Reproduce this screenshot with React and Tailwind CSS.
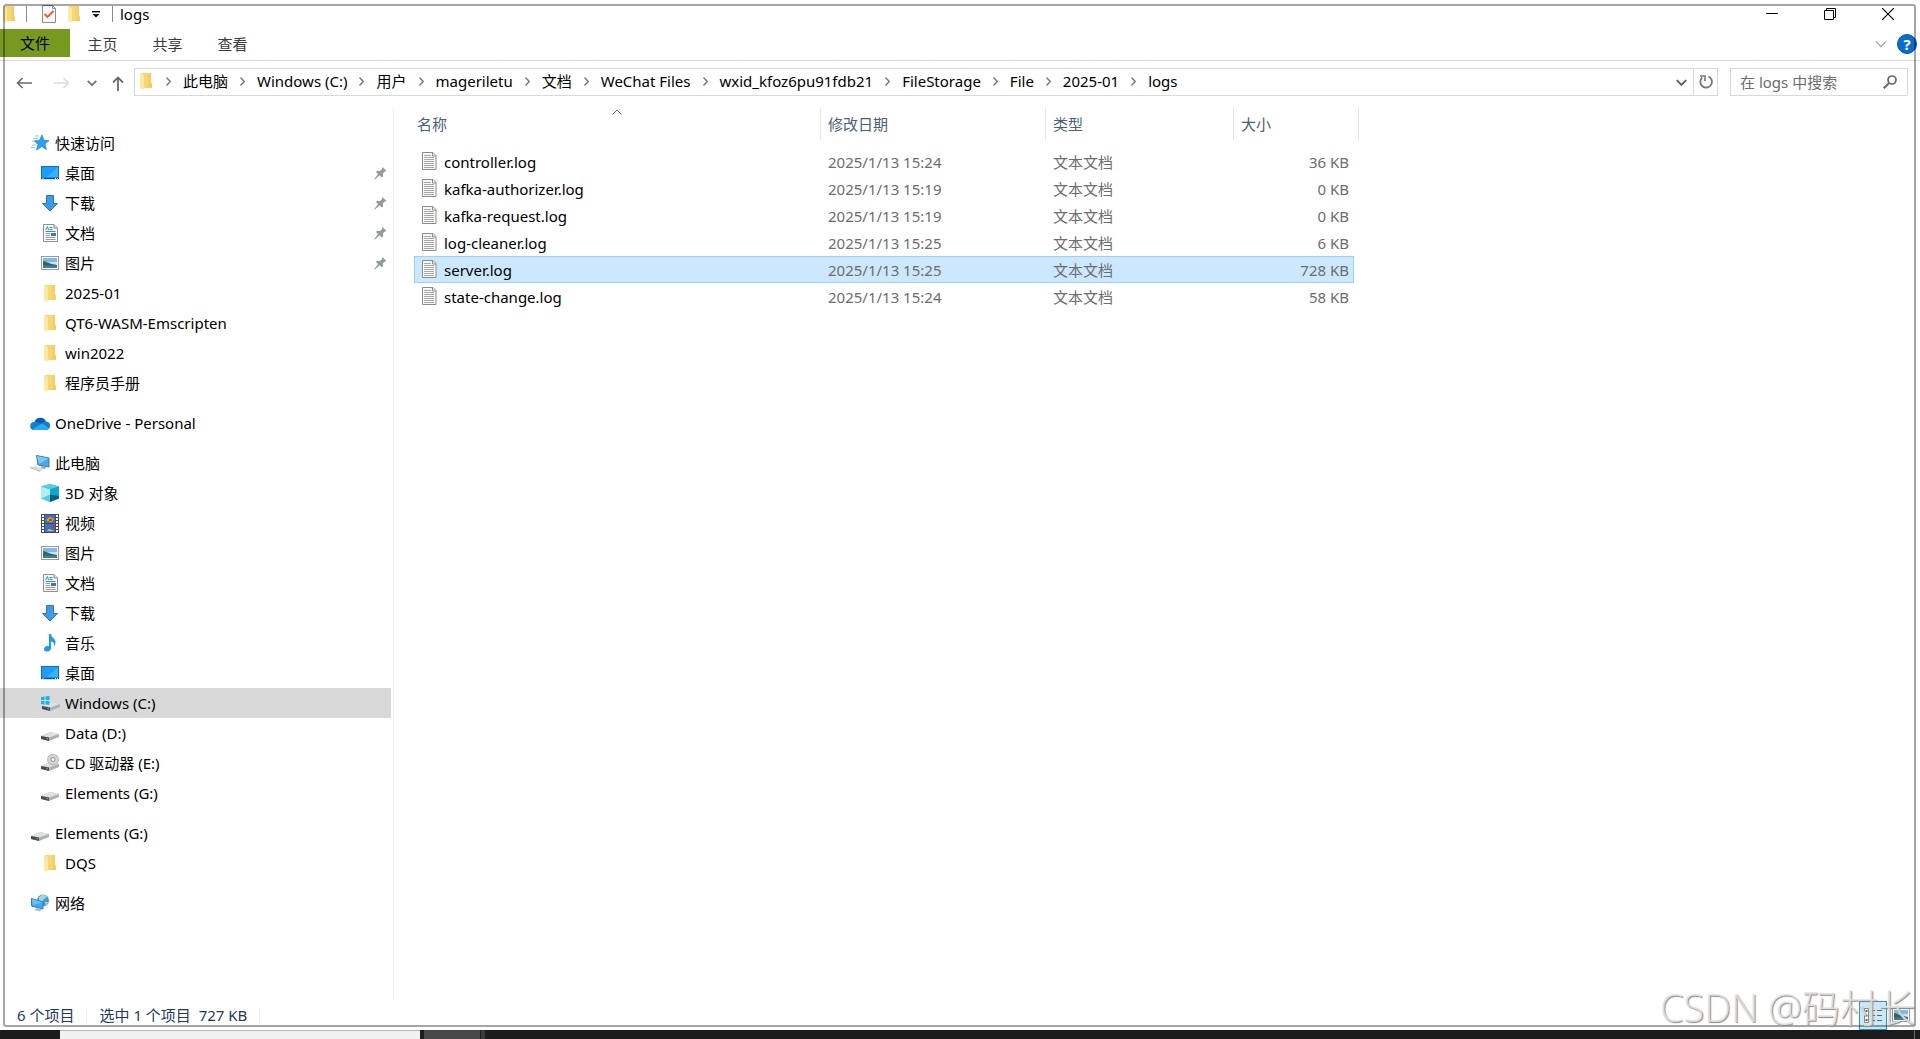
import { useState } from 'react';

const FolderIcon = () => (
  <svg width="12" height="17" viewBox="0 0 12 17">
    <path d="M1 0h10v10.5h1V15H1z" fill="#f7d774" />
    <path d="M9 0h2v10.5h1V15H8z" fill="#f3ce63" />
    <path d="M0 0l4 2v13l-1 2-3-2z" fill="#fde9a5" />
  </svg>
);

const CheckPageIcon = () => (
  <svg width="14" height="18" viewBox="0 0 14 18">
    <path d="M.5.5h10l3 3v14H.5z" fill="#f7f8fa" stroke="#8a8f94" />
    <path d="M10.5.5v3h3" fill="none" stroke="#8a8f94" />
    <path d="M2.500 9l3 3L11.500 6" fill="none" stroke="#ef5a1a" strokeWidth="1.8" />
  </svg>
);

const StarIcon = () => (
  <svg width="18" height="18" viewBox="0 0 18 18">
    <path d="M4 2h4M2 4.500h5M1 7h4M1 11h4M0 13.500h4" stroke="#8ccbf2" />
    <path d="M11 1l1.900 5.200 5.100.3-4 3.400 1.300 5.500-4.500-2.800L5.500 16l1.500-5.500L3.500 7l4.800-.5z" fill="#2ba3ec" stroke="#1b7fc4" strokeWidth=".7" />
  </svg>
);

const DesktopIcon = () => (
  <svg width="18" height="14" viewBox="0 0 18 14">
    <rect x=".5" y=".5" width="17" height="12" fill="#1a9fff" stroke="#0f6fb8" />
    <path d="M17 1v10H6z" fill="#3db0ff" />
    <path d="M0 12.500h18" stroke="#0b5187" strokeWidth="1.400" />
    <path d="M1.500 12.500h1M14 12.500h1M16 12.500h1" stroke="#fff" />
  </svg>
);

const DownloadIcon = () => (
  <svg width="18" height="17" viewBox="0 0 18 17">
    <path d="M5.500.5h7v8h4L9 16 1.500 8.500h4z" fill="#3f9be6" stroke="#2b78c0" />
  </svg>
);

const DocumentIcon = () => (
  <svg width="15" height="18" viewBox="0 0 15 18">
    <path d="M.5.500h10.500l3.500 3.500v13.500H.5z" fill="#fbfbfb" stroke="#8f8f8f" />
    <path d="M11 .5V4h3.500" fill="#ddd" stroke="#8f8f8f" />
    <path d="M2.500 6L4.500 2.500 5.500 6M6.500 3.500h3M6.500 5.500h3M2.500 7.500h10" stroke="#2b8fd6" fill="none" />
    <path d="M2.500 9.500H7M2.500 11.500H7M2.500 13.500h10M2.500 15.500h10" stroke="#9a9a9a" />
    <path d="M8 9h5v3H8z" fill="#3b78b8" />
  </svg>
);

const PictureIcon = () => (
  <svg width="18" height="14" viewBox="0 0 18 14">
    <rect x=".5" y=".5" width="17" height="13" fill="#fff" stroke="#9a9a9a" />
    <path d="M2 2h14v10H2z" fill="#7db9f2" />
    <path d="M2 6h14v3H2z" fill="#c8e4f6" />
    <path d="M2 5c4 .5 6 3 14 4v1H2z" fill="#34684f" />
    <path d="M2 9.500h14V12H2z" fill="#3f7d9e" />
  </svg>
);

const OneDriveIcon = () => (
  <svg width="20" height="13" viewBox="0 0 20 13">
    <path d="M4.500 5a6 6 0 0111.300-.6A4.300 4.300 0 0116 13H4A4 4 0 014.500 5z" fill="#0f7fd8" />
    <path d="M5 4.500a6 6 0 0110.800-.1C14 4.500 13 5.500 11.500 6.500z" fill="#0a5cb0" />
    <path d="M2 12.500l10-6 7.300 4.500A4 4 0 0116 13H4a4 4 0 01-2-.5z" fill="#29a9ee" />
  </svg>
);

const ComputerIcon = () => (
  <svg width="20" height="17" viewBox="0 0 20 17">
    <path d="M6.500.5L19 3v9L8 10z" fill="#47a9f0" stroke="#3c7cae" />
    <path d="M7 1l11.500 2.500L9 9z" fill="#7cc7fa" />
    <path d="M12 11l4 1-1 2-4-1z" fill="#9aa2aa" />
    <path d="M0 12.500l5-1.500 9 3-4 2.500z" fill="#d8dbde" />
    <path d="M0 12.500l10 4" stroke="#b3b8bd" />
  </svg>
);

const CubeIcon = () => (
  <svg width="18" height="18" viewBox="0 0 18 18">
    <path d="M9 0l9 2.500v12L9 18 0 14.500v-12z" fill="#27b7d0" />
    <path d="M0 2.500l9 2.700V18l-9-3.500z" fill="#b5eef0" />
    <path d="M0 14.500l9-4V18z" fill="#58cddb" />
    <path d="M0 2.500L9 0l9 2.500-9 2.700z" fill="#4fd0dc" />
    <path d="M9 5.200l9-2.700v9.500L9 10.500z" fill="#10a5d4" />
    <path d="M9 10.500l9 1.500v2.500L9 18z" fill="#06627f" />
  </svg>
);

const VideoIcon = () => (
  <svg width="18" height="19" viewBox="0 0 18 19">
    <path d="M0 0h18v19H0z" fill="#4a4a4a" />
    <path d="M2 1v18M16 1v18" stroke="#fff" strokeWidth="2" strokeDasharray="2 1" />
    <path d="M4 1h10v8H4zM4 10h10v8H4z" fill="#3c6fd2" />
    <path d="M5 6l4-3 4 2-2 3H7z" fill="#d9a520" />
    <path d="M8 5h3v2H8zM11 11h2v3h-2z" fill="#c23a20" />
    <path d="M6 17l2-2 3 1 2 1z" fill="#e5c32c" />
    <path d="M5 7h3v2H5z" fill="#3e8f41" />
  </svg>
);

const MusicIcon = () => (
  <svg width="12" height="18" viewBox="0 0 12 18">
    <path d="M5 0h2c0 3.500 4.500 4.500 4.500 8 0 1.500-.5 3-1.500 4 .3-3-.5-4-3-4.800V14c0 2-1.500 3.500-3.800 3.500-2 0-3.200-1-3.200-2.300C0 13.500 1.500 12 3.500 12c.5 0 1 .1 1.500.3z" fill="#189bf0" />
  </svg>
);

const DriveBody = () => (
  <>
    <path d="M0 12l9-4 9 2v3l-10 4-8-2z" fill="#aeb0b2" />
    <path d="M0 12l9-4 9 2-10 3.500z" fill="#dfe1e3" />
    <path d="M0 12l8 1.500V17l-8-2z" fill="#4b4e50" />
    <path d="M5.500 14.500l1.500.3" stroke="#58c96a" />
  </>
);

const DriveIcon = () => (
  <svg width="18" height="18" viewBox="0 0 18 18"><DriveBody /></svg>
);

const SystemDriveIcon = () => (
  <svg width="19" height="18" viewBox="-1 0 19 18">
    <DriveBody />
    <path d="M-1 3l3.500-.5V6H-1zM3.500 2.300L7.500 2v4h-4zM-1 7h3.500v3.500L-1 10zM3.500 7h4v4l-4-.4z" fill="#12b5f2" />
  </svg>
);

const CdDriveIcon = () => (
  <svg width="18" height="18" viewBox="0 0 18 18">
    <DriveBody />
    <circle cx="12" cy="5.500" r="5.500" fill="#d3d6d8" stroke="#a3a6a9" strokeWidth=".7" />
    <circle cx="12" cy="5.500" r="2" fill="#f5f5f5" stroke="#8f9295" />
  </svg>
);

const NetworkIcon = () => (
  <svg width="19" height="18" viewBox="0 0 19 18">
    <circle cx="12" cy="6.500" r="6" fill="#4a9cc4" />
    <path d="M8 3c3-3 7-2 8 0l-3 2-2 3-3-1zM14 8l3 0-2 4z" fill="#a7d3df" />
    <path d="M.5 4.500L12 8v7L.5 12z" fill="#3ba8f5" stroke="#2a7fc0" />
    <path d="M1 5l10.500 3.500L2 11z" fill="#6cc2fb" />
    <path d="M6 14l-3 2 6 1.500 2-2z" fill="#b8bcc0" />
  </svg>
);

const PinIcon = () => (
  <svg width="13" height="13" viewBox="0 0 13 13">
    <path d="M8.500 0L12.500 4l-2 .7-1.700 1.800.3 3-1.300 1L5.500 8.300 1 12.500l-.8-.3L4 7 2 5l1-1.200 3 .2 2-1.700z" fill="#8f9ba3" />
  </svg>
);

const TextFileIcon = () => (
  <svg width="15" height="18" viewBox="0 0 15 18">
    <path d="M.5.500h10.500l3 3v14H.5z" fill="#f8f8f8" stroke="#8c8c8c" />
    <path d="M10.500.5v3.500H14" fill="none" stroke="#8c8c8c" />
    <path d="M2 3.500h7M2 5.500h10M2 7.500h10M2 9.500h10M2 11.500h10M2 13.500h10M2 15.500h10" stroke="#a8a8a8" />
  </svg>
);

const CrumbChevron = () => (
  <svg width="5" height="9" viewBox="0 0 5 9" className="shrink-0">
    <path d="M.5.500l3.800 4-3.800 4" fill="none" stroke="#767676" strokeWidth="1.400" />
  </svg>
);

const DownChevron = ({ size = 10, color = '#5f5f5f', weight = 1.8 }) => (
  <svg width={size} height={size} viewBox="0 0 10 10">
    <path d="M.7 2.800L5 7.200l4.300-4.400" fill="none" stroke={color} strokeWidth={weight} />
  </svg>
);

const tabs = ['主页', '共享', '查看'];

const crumbs = [
  '此电脑', 'Windows (C:)', '用户', 'mageriletu', '文档', 'WeChat Files',
  'wxid_kfoz6pu91fdb21', 'FileStorage', 'File', '2025-01', 'logs',
];

const navGroups = [
  {
    id: 'quick', label: '快速访问', icon: StarIcon,
    items: [
      { label: '桌面', icon: DesktopIcon, pinned: true },
      { label: '下载', icon: DownloadIcon, pinned: true },
      { label: '文档', icon: DocumentIcon, pinned: true },
      { label: '图片', icon: PictureIcon, pinned: true },
      { label: '2025-01', icon: FolderIcon },
      { label: 'QT6-WASM-Emscripten', icon: FolderIcon },
      { label: 'win2022', icon: FolderIcon },
      { label: '程序员手册', icon: FolderIcon },
    ],
  },
  { id: 'onedrive', label: 'OneDrive - Personal', icon: OneDriveIcon, items: [] },
  {
    id: 'pc', label: '此电脑', icon: ComputerIcon,
    items: [
      { label: '3D 对象', icon: CubeIcon },
      { label: '视频', icon: VideoIcon },
      { label: '图片', icon: PictureIcon },
      { label: '文档', icon: DocumentIcon },
      { label: '下载', icon: DownloadIcon },
      { label: '音乐', icon: MusicIcon },
      { label: '桌面', icon: DesktopIcon },
      { label: 'Windows (C:)', icon: SystemDriveIcon, current: true },
      { label: 'Data (D:)', icon: DriveIcon },
      { label: 'CD 驱动器 (E:)', icon: CdDriveIcon },
      { label: 'Elements (G:)', icon: DriveIcon },
    ],
  },
  {
    id: 'elements', label: 'Elements (G:)', icon: DriveIcon,
    items: [{ label: 'DQS', icon: FolderIcon }],
  },
  { id: 'network', label: '网络', icon: NetworkIcon, items: [] },
];

const files = [
  { name: 'controller.log', date: '2025/1/13 15:24', size: '36 KB' },
  { name: 'kafka-authorizer.log', date: '2025/1/13 15:19', size: '0 KB' },
  { name: 'kafka-request.log', date: '2025/1/13 15:19', size: '0 KB' },
  { name: 'log-cleaner.log', date: '2025/1/13 15:25', size: '6 KB' },
  { name: 'server.log', date: '2025/1/13 15:25', size: '728 KB' },
  { name: 'state-change.log', date: '2025/1/13 15:24', size: '58 KB' },
];

const TitleBar = () => (
  <header className="flex h-[29px] items-start justify-between">
    <div className="flex h-7 items-center pl-[3px]">
      <FolderIcon />
      <span className="ml-[11px] h-4 w-px bg-[#8a8a8a]" />
      <button aria-label="属性" className="ml-[15px]"><CheckPageIcon /></button>
      <button aria-label="新建文件夹" className="ml-3"><FolderIcon /></button>
      <button aria-label="自定义快速访问工具栏" className="ml-3">
        <svg width="8" height="7" viewBox="0 0 8 7">
          <path d="M0 .7h8" stroke="#000" strokeWidth="1.400" />
          <path d="M.5 3h7L4 6.500z" fill="#000" />
        </svg>
      </button>
      <span className="ml-3 h-4 w-px bg-[#8a8a8a]" />
      <h1 className="ml-[7px]">logs</h1>
    </div>
    <div className="flex h-7 pr-[3px]">
      <button aria-label="最小化" className="flex w-[58px] items-center justify-center">
        <svg width="12" height="12" viewBox="0 0 12 12"><path d="M0 5.500h12" stroke="#000" /></svg>
      </button>
      <button aria-label="还原" className="flex w-[58px] items-center justify-center">
        <svg width="12" height="12" viewBox="0 0 12 12">
          <path d="M.5 2.500h9v9h-9zM2.500 2.500v-2h9v9h-2" fill="none" stroke="#000" />
        </svg>
      </button>
      <button aria-label="关闭" className="flex w-[58px] items-center justify-center">
        <svg width="12" height="12" viewBox="0 0 12 12"><path d="M0 0l12 12M12 0L0 12" stroke="#000" strokeWidth="1.200" /></svg>
      </button>
    </div>
  </header>
);

const Ribbon = () => (
  <div className="flex h-8 items-start justify-between border-b border-[#dadbdc]">
    <div className="flex h-[30px] items-start">
      <button className="h-7 w-[70px] bg-[#77991f]">文件</button>
      {tabs.map((tab) => (
        <button key={tab} className="h-[30px] w-[65px] text-[#3b3b3b]">{tab}</button>
      ))}
    </div>
    <div className="flex h-[30px] items-center gap-[10px] pr-[3px]">
      <button aria-label="展开功能区"><DownChevron size={12} color="#a0a0a0" weight={1} /></button>
      <button aria-label="帮助" className="flex h-5 w-5 items-center justify-center rounded-full border border-[#0a57a4] bg-[#0a6cce] font-bold text-white">?</button>
    </div>
  </div>
);

const AddressBar = () => (
  <div className="flex h-[47px] items-start pr-3 pt-[7px]">
    <div className="mr-[6px] flex h-[30px] items-center">
      <button aria-label="后退" className="flex w-12 justify-center">
        <svg width="16" height="12" viewBox="0 0 16 12"><path d="M16 6H1.500M6.500 1l-5 5 5 5" fill="none" stroke="#6a6a6a" strokeWidth="1.600" /></svg>
      </button>
      <button aria-label="前进" className="flex w-7 justify-center">
        <svg width="16" height="12" viewBox="0 0 16 12"><path d="M0 6h14.500M9.500 1l5 5-5 5" fill="none" stroke="#dcdcdc" strokeWidth="1.600" /></svg>
      </button>
      <button aria-label="最近浏览的位置" className="flex w-8 justify-center"><DownChevron color="#767676" /></button>
      <button aria-label="上移" className="flex w-5 justify-center">
        <svg width="12" height="15" viewBox="0 0 12 15"><path d="M6 15V1.500M1 6.500l5-5 5 5" fill="none" stroke="#6a6a6a" strokeWidth="1.800" /></svg>
      </button>
    </div>
    <div className="flex h-7 min-w-0 flex-1 border border-[#d9d9d9]">
      <nav aria-label="地址" className="flex min-w-0 flex-1 items-center gap-3 overflow-hidden pb-[2px] pl-[5px]">
        <span className="mr-[2px] shrink-0"><FolderIcon /></span>
        {crumbs.map((crumb) => (
          <div key={crumb} className="flex shrink-0 items-center gap-3 whitespace-nowrap">
            <CrumbChevron />
            <a href="#logs">{crumb}</a>
          </div>
        ))}
      </nav>
      <button aria-label="上一个位置" className="flex w-6 items-center justify-center"><DownChevron size={11} /></button>
      <button aria-label="刷新" className="flex w-6 items-center justify-center border-l border-[#d9d9d9]">
        <svg width="14" height="14" viewBox="0 0 14 14">
          <path d="M9.500 1.500A5.800 5.800 0 113.200 2.500" fill="none" stroke="#767676" strokeWidth="1.800" />
          <path d="M1 1h5v5" fill="none" stroke="#767676" strokeWidth="1.600" />
        </svg>
      </button>
    </div>
    <div className="ml-3 flex h-7 w-[178px] items-center border border-[#d9d9d9] pl-[9px] pr-[10px]">
      <input type="search" aria-label="在 logs 中搜索" placeholder="在 logs 中搜索" className="min-w-0 flex-1 outline-none placeholder:text-[#6d6d6d]" />
      <svg width="14" height="14" viewBox="0 0 14 14">
        <circle cx="9" cy="5" r="4" fill="none" stroke="#6a6a6a" strokeWidth="1.700" />
        <path d="M6 8L.8 13.200" stroke="#6a6a6a" strokeWidth="2.200" />
      </svg>
    </div>
  </div>
);

const NavRow = ({ item, nested }) => {
  const Icon = item.icon;
  return (
    <a
      href="#folder"
      className={`flex h-[30px] items-center pr-1 ${nested ? 'pl-10' : 'pl-[30px]'} ${item.current ? 'bg-[#d9d9d9]' : ''}`}
    >
      <span className="mr-[5px] flex w-5 justify-center">
        <Icon />
      </span>
      <span className="flex-1">{item.label}</span>
      {item.pinned && <PinIcon />}
    </a>
  );
};

const NavPane = () => (
  <nav aria-label="导航窗格" className="flex w-[394px] shrink-0 flex-col gap-[10px] border-r border-[#f0f0f0] pr-[2px] pt-5">
    {navGroups.map((group) => (
      <div key={group.id}>
        <NavRow item={group} />
        {group.items.map((item) => (
          <NavRow key={item.label} item={item} nested />
        ))}
      </div>
    ))}
  </nav>
);

const FileTable = ({ selected, onSelect }) => (
  <table className="w-[945px] table-fixed border-separate border-spacing-0 text-[#6d6d6d]">
    <colgroup>
      <col className="w-[407px]" />
      <col className="w-[225px]" />
      <col className="w-[188px]" />
      <col className="w-[120px]" />
      <col className="w-[5px]" />
    </colgroup>
    <thead>
      <tr className="text-left text-[#4c607a]">
        <th className="p-0 pb-2 font-normal">
          <button className="relative flex h-8 w-full items-center border-r border-[#e5e5e5] pl-[3px]">
            名称
            <svg width="10" height="6" viewBox="0 0 10 6" className="absolute left-1/2 top-px -translate-x-1/2">
              <path d="M.5 5.500L5 1l4.500 4.500" fill="none" stroke="#6d6d6d" />
            </svg>
          </button>
        </th>
        <th className="p-0 pb-2 font-normal">
          <button className="flex h-8 w-full items-center border-r border-[#e5e5e5] pl-[7px]">修改日期</button>
        </th>
        <th className="p-0 pb-2 font-normal">
          <button className="flex h-8 w-full items-center border-r border-[#e5e5e5] pl-[7px]">类型</button>
        </th>
        <th colSpan={2} className="p-0 pb-2 font-normal">
          <button className="flex h-8 w-full items-center border-r border-[#e5e5e5] pl-[7px]">大小</button>
        </th>
      </tr>
    </thead>
    <tbody>
      {files.map((file) => {
        const cell = file.name === selected
          ? 'h-[27px] border-y border-[#99d1ff] bg-[#cce8ff]'
          : 'h-[27px] border-y border-transparent';
        return (
          <tr key={file.name} onClick={() => onSelect(file.name)}>
            <td className={`${cell} border-l p-0 pl-[7px] text-black`}>
              <span className="flex items-center gap-[7px]">
                <span className="pb-[2px]"><TextFileIcon /></span>
                {file.name}
              </span>
            </td>
            <td className={`${cell} p-0 pl-[7px]`}>{file.date}</td>
            <td className={`${cell} p-0 pl-[7px]`}>文本文档</td>
            <td className={`${cell} border-r p-0 pr-1 text-right`}>{file.size}</td>
            <td className="p-0" />
          </tr>
        );
      })}
    </tbody>
  </table>
);

const StatusBar = () => (
  <footer className="flex h-[30px] items-center justify-between pl-[17px] pr-[10px] text-[#1e395b]">
    <div className="flex items-center gap-3">
      <span>6 个项目</span>
      <span className="h-[13px] w-px bg-[#ececec]" />
      <span className="whitespace-pre">选中 1 个项目  727 KB</span>
      <span className="h-[13px] w-px bg-[#ececec]" />
    </div>
    <div className="flex items-center gap-[5px]">
      <button aria-label="详细信息" className="flex h-[29px] w-7 items-center justify-center border border-[#2a93d5] bg-[#cbe8f6]">
        <svg width="18" height="15" viewBox="0 0 18 15">
          <path d="M.5.500h4v14h-4z" fill="#fff" stroke="#888" />
          <path d="M1.500 3h2" stroke="#2f72b5" strokeWidth="2" />
          <path d="M1.500 7.500h2" stroke="#7a8a3a" strokeWidth="2" />
          <path d="M1.500 12h2" stroke="#c0392b" strokeWidth="2" />
          <path d="M7 2.500h4M13 2.500h5M7 7.500h4M13 7.500h5M7 12.500h4M13 12.500h5" stroke="#666" />
        </svg>
      </button>
      <button aria-label="大缩略图"><PictureIcon /></button>
    </div>
  </footer>
);

const Taskbar = () => (
  <div className="flex h-[9px] shrink-0 overflow-hidden bg-[#1c1c1c]">
    <div className="ml-[60px] w-[360px] border-t border-[#b5b5b5] bg-[#f1f1f1]" />
    <div className="ml-1 w-14 bg-[#484848]" />
    <div className="ml-px w-1 bg-[#3a3a3a]" />
    <div className="flex flex-1 justify-end border-r border-[#6a6a6a]">
      <span className="mr-[88px] pt-[3px] text-white">20:15</span>
    </div>
    <div className="w-[5px]" />
  </div>
);

const App = () => {
  const [selected, setSelected] = useState('server.log');

  return (
    <div className="relative flex min-h-screen flex-col bg-white font-['Noto_Sans','Noto_Sans_CJK_SC',sans-serif] text-[15px] leading-5 text-black">
      <TitleBar />
      <Ribbon />
      <AddressBar />
      <div className="flex flex-1">
        <NavPane />
        <main className="min-w-0 flex-1 pl-5">
          <FileTable selected={selected} onSelect={setSelected} />
        </main>
      </div>
      <StatusBar />
      <Taskbar />

      {/* Window frame drawn over the content */}
      <div className="pointer-events-none absolute bottom-3 left-[3px] right-1 top-1 rounded-[3px] border-2 border-black/35" />
      <div className="pointer-events-none absolute bottom-3 right-1 whitespace-nowrap font-['Open_Sans','Noto_Sans_CJK_SC',sans-serif] text-[38px] font-light leading-10 text-[#e2e2e2]/90 [text-shadow:1px_1px_1px_#8a8a8a]">
        CSDN @码村长
      </div>
    </div>
  );
};

export default App;
